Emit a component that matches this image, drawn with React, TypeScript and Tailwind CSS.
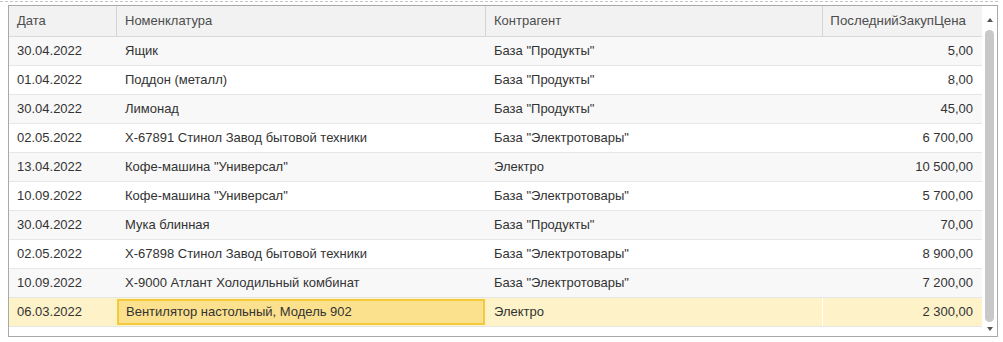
const rows = [
  { date: "30.04.2022", item: "Ящик", partner: "База \"Продукты\"", price: "5,00" },
  { date: "01.04.2022", item: "Поддон (металл)", partner: "База \"Продукты\"", price: "8,00" },
  { date: "30.04.2022", item: "Лимонад", partner: "База \"Продукты\"", price: "45,00" },
  { date: "02.05.2022", item: "X-67891 Стинол Завод бытовой техники", partner: "База \"Электротовары\"", price: "6 700,00" },
  { date: "13.04.2022", item: "Кофе-машина \"Универсал\"", partner: "Электро", price: "10 500,00" },
  { date: "10.09.2022", item: "Кофе-машина \"Универсал\"", partner: "База \"Электротовары\"", price: "5 700,00" },
  { date: "30.04.2022", item: "Мука блинная", partner: "База \"Продукты\"", price: "70,00" },
  { date: "02.05.2022", item: "X-67898 Стинол Завод бытовой техники", partner: "База \"Электротовары\"", price: "8 900,00" },
  { date: "10.09.2022", item: "X-9000 Атлант Холодильный комбинат", partner: "База \"Электротовары\"", price: "7 200,00" },
  { date: "06.03.2022", item: "Вентилятор настольный, Модель 902", partner: "Электро", price: "2 300,00" },
];

const cols = "grid grid-cols-[108px_369px_337px_159px]";

export default function App() {
  return (
    <div className="w-[1003px] h-[342px] bg-white font-['Liberation_Sans',Arial,sans-serif] text-[13px]">
      <div className="pt-[1px] pr-[5px]">
        <div className="border-t border-dashed border-[#c4c4c4]" />
      </div>

      <div className="ml-[8px] mt-[3px] w-[990px] h-[332px] border border-[#a9a9a9] flex">
        {/* Table */}
        <div className="flex flex-col w-[973px]">
          {/* Header */}
          <div className={`${cols} h-[31px] bg-[#f2f2f2] border-b border-[#d9d9d9] text-[#4d4d4d]`}>
            <div className="flex items-center pl-2 border-r border-[#d4d4d4]">Дата</div>
            <div className="flex items-center pl-2 border-r border-[#d4d4d4]">Номенклатура</div>
            <div className="flex items-center pl-2 border-r border-[#d4d4d4]">Контрагент</div>
            <div className="flex items-center justify-end pr-[16px] text-[13.3px]">ПоследнийЗакупЦена</div>
          </div>

          {rows.map((r, i) => {
            const selected = i === rows.length - 1;
            const bg = selected ? "bg-[#fdf2c8]" : i % 2 === 0 ? "bg-[#f8f8f8]" : "bg-white";
            return (
              <div key={i} className={`${cols} h-[29px] border-b border-[#e6e6e6] text-[#333333] ${bg}`}>
                <div className="flex items-center pl-2">{r.date}</div>
                {selected ? (
                  <div className="flex items-center pl-[7px] my-[1px] mr-[1px] border-2 border-[#f3c93f] bg-[#fbe18e]">{r.item}</div>
                ) : (
                  <div className="flex items-center pl-2">{r.item}</div>
                )}
                <div className={`flex items-center pl-2 ${selected ? "border-r border-white" : ""}`}>{r.partner}</div>
                <div className="flex items-center justify-end pr-[9px]">{r.price}</div>
              </div>
            );
          })}
        </div>

        {/* Scrollbar */}
        <div className="flex-1 flex flex-col items-center bg-white">
          <div className="h-[24px] flex items-center justify-center pt-[4px]">
            <div className="w-0 h-0 border-l-[3.5px] border-r-[3.5px] border-b-[4px] border-l-transparent border-r-transparent border-b-[#555]" />
          </div>
          <div className="w-[9px] h-[292px] rounded-[5px] bg-[#c8c8c8]" />
          <div className="flex-1 flex items-center justify-center">
            <div className="w-0 h-0 border-l-[3.5px] border-r-[3.5px] border-t-[4px] border-l-transparent border-r-transparent border-t-[#555]" />
          </div>
        </div>
      </div>
    </div>
  );
}
